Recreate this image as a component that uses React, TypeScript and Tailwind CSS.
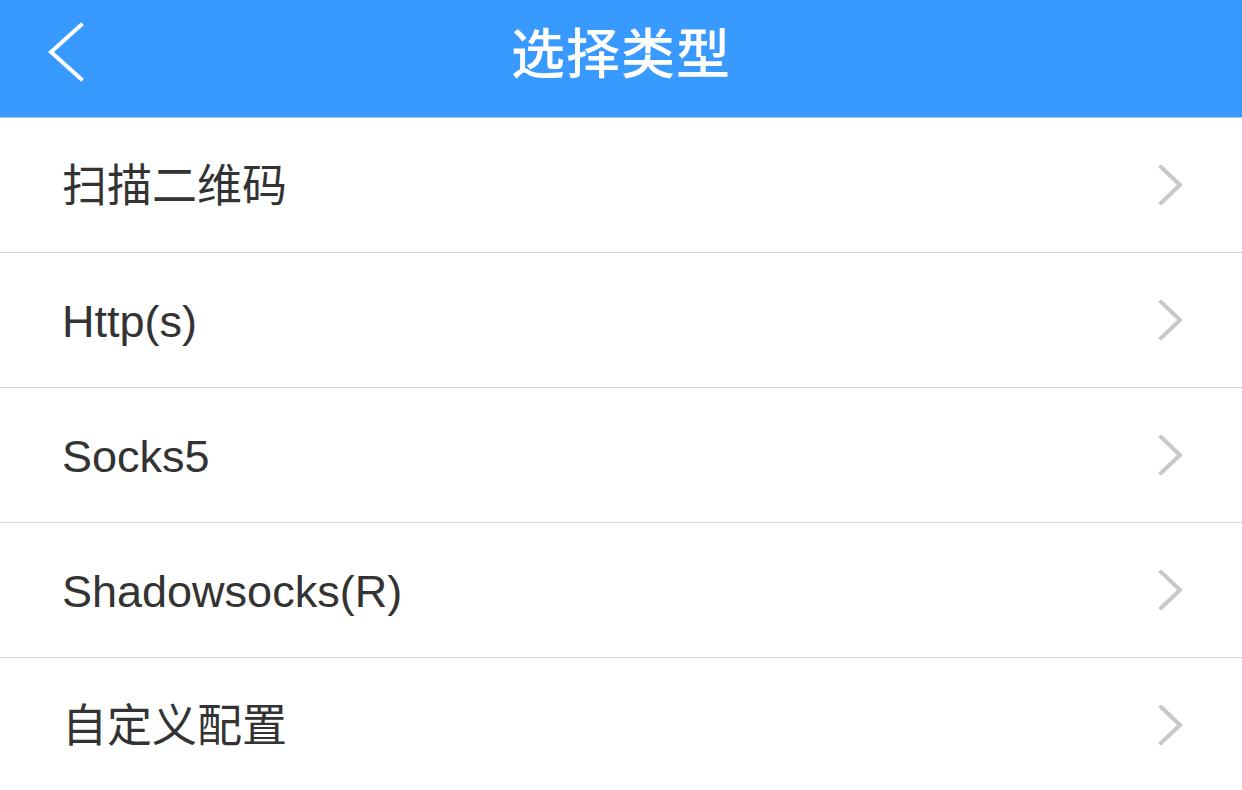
const items = ['扫描二维码', 'Http(s)', 'Socks5', 'Shadowsocks(R)', '自定义配置']

function ChevronRight() {
  return (
    <svg width="26" height="40" viewBox="0 0 26 40" fill="none">
      <path d="M3 2 L22 20 L3 38" stroke="#c7c7cc" strokeWidth="4" strokeLinecap="square" strokeLinejoin="miter" />
    </svg>
  )
}

export default function App() {
  return (
    <div
      className="w-[1242px] h-[790px] bg-white overflow-hidden"
      style={{ fontFamily: '"Liberation Sans", "Noto Sans CJK SC", sans-serif' }}
    >
      <header className="h-[118px] bg-[#3899ff] border-b border-[#b8c4d0] relative flex items-center justify-center">
        <button className="absolute left-[46px] top-[22px] w-[40px] h-[60px] flex items-center">
          <svg width="40" height="60" viewBox="0 0 40 60" fill="none">
            <path d="M35 3 L5 30 L35 57" stroke="white" strokeWidth="4" strokeLinecap="square" />
          </svg>
        </button>
        <h1
          className="text-white text-[54px] font-medium tracking-[1px] leading-none -mt-[16px]"
          style={{ fontFamily: '"Noto Sans CJK SC", sans-serif' }}
        >
          选择类型
        </h1>
      </header>
      <ul>
        {items.map((label) => (
          <li
            key={label}
            className="h-[135px] border-b border-[#d4d4d4] flex items-center justify-between pl-[62px] pr-[58px]"
          >
            <span className="text-[45px] text-[#333333] leading-none mt-[3px]">{label}</span>
            <ChevronRight />
          </li>
        ))}
      </ul>
    </div>
  )
}
